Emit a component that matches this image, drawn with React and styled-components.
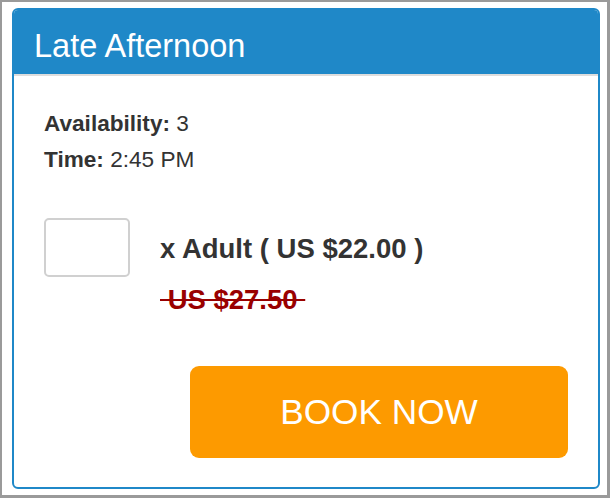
import React from "react";
import styled, { createGlobalStyle } from "styled-components";

const GlobalStyle = createGlobalStyle`
  * { box-sizing: border-box; }
  html, body { margin: 0; padding: 0; background: #ffffff; }
  body { font-family: "Liberation Sans", Arial, Helvetica, sans-serif; color: #333333; }
`;

const Frame = styled.div`
  width: 610px;
  height: 498px;
  border-style: solid;
  border-color: #9a9a9a;
  border-width: 2px 3px 3px 2px;
  padding: 6px 7px 6px 10px;
  background: #ffffff;
  display: flex;
`;

const Card = styled.section`
  flex: 1;
  display: flex;
  flex-direction: column;
  border: 2px solid #1f88c8;
  border-radius: 6px;
  overflow: hidden;
  background: #ffffff;
`;

const Header = styled.header`
  background: #1f88c8;
  color: #ffffff;
  font-size: 32.5px;
  line-height: 36px;
  font-weight: 400;
  padding: 18px 20px 10px;
  margin: 0;
`;

const Body = styled.div`
  flex: 1;
  display: flex;
  flex-direction: column;
  border-top: 2px solid #dddddd;
  padding: 30px 30px 29px 30px;
`;

const InfoLine = styled.div`
  font-size: 22.6px;
  line-height: 36px;
  color: #333333;
`;

const Label = styled.strong`
  font-weight: 700;
`;

const TicketRow = styled.div`
  margin-top: 40px;
  display: grid;
  grid-template-columns: 86px 1fr;
  column-gap: 30px;
  align-items: start;
`;

const QtyInput = styled.input`
  width: 86px;
  height: 59px;
  border: 2px solid #d0d0d0;
  border-radius: 5px;
  background: #ffffff;
  font-size: 22px;
  padding: 0 10px;
  outline: none;
`;

const TicketInfo = styled.div`
  display: flex;
  flex-direction: column;
`;

const TicketLabel = styled.div`
  height: 59px;
  display: flex;
  align-items: center;
  padding-top: 2px;
  font-size: 27.5px;
  line-height: 32px;
  font-weight: 700;
  color: #333333;
  white-space: nowrap;
`;

const OldPrice = styled.div`
  margin-top: 7px;
  font-size: 27.5px;
  line-height: 32px;
  font-weight: 700;
  color: #990000;
  text-decoration: line-through;
  white-space: nowrap;
`;

const Actions = styled.div`
  margin-top: auto;
  display: flex;
  justify-content: flex-end;
`;

const BookButton = styled.button`
  width: 378px;
  height: 92px;
  border: none;
  border-radius: 9px;
  background: #fd9a00;
  color: #ffffff;
  font-family: "Liberation Sans", Arial, Helvetica, sans-serif;
  font-size: 35.2px;
  font-weight: 400;
  display: flex;
  align-items: center;
  justify-content: center;
  padding: 0;
  cursor: pointer;
`;

export default function App() {
  return (
    <>
      <GlobalStyle />
      <Frame>
        <Card>
          <Header>Late Afternoon</Header>
          <Body>
            <InfoLine>
              <Label>Availability:</Label> 3
            </InfoLine>
            <InfoLine>
              <Label>Time:</Label> 2:45 PM
            </InfoLine>
            <TicketRow>
              <QtyInput type="text" aria-label="Adult quantity" />
              <TicketInfo>
                <TicketLabel>x Adult ( US $22.00 )</TicketLabel>
                <OldPrice>{"\u00a0US $27.50\u00a0"}</OldPrice>
              </TicketInfo>
            </TicketRow>
            <Actions>
              <BookButton type="button">BOOK NOW</BookButton>
            </Actions>
          </Body>
        </Card>
      </Frame>
    </>
  );
}
